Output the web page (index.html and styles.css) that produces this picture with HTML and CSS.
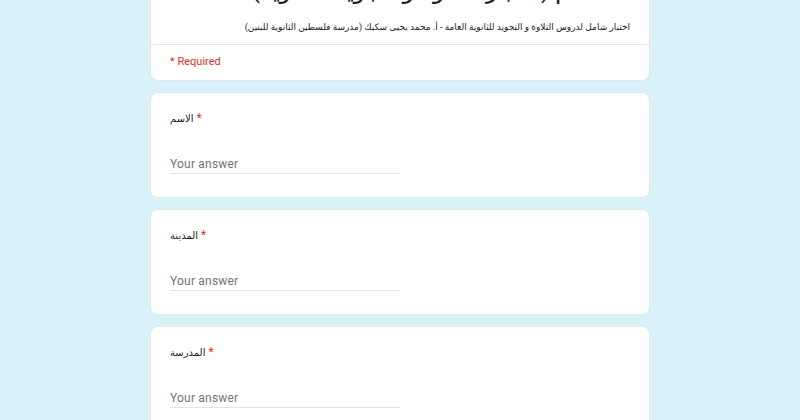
FILE: index.html
```html
<!DOCTYPE html>
<html lang="ar">
<head>
<meta charset="UTF-8">
<meta name="viewport" content="width=device-width, initial-scale=1.0">
<title>اختبار التلاوة والتجويد</title>
<link rel="stylesheet" href="styles.css">
</head>
<body>
<div class="form">
  <div class="card header-card">
    <div class="header-top">
      <h1 class="form-title">2022 م (اختبار التلاوة والتجويد للثانوية)</h1>
      <p class="form-desc">اختبار شامل لدروس التلاوة و التجويد للثانوية العامة - أ. محمد يحيى سكيك (مدرسة فلسطين الثانوية للبنين)</p>
    </div>
    <div class="header-bottom">
      <span class="required-note">* Required</span>
    </div>
  </div>

  <div class="card question">
    <div class="q-label"><span class="ar" dir="rtl">الاسم</span> <span class="star">*</span></div>
    <input class="answer" type="text" placeholder="Your answer">
  </div>

  <div class="card question">
    <div class="q-label"><span class="ar" dir="rtl">المدينة</span> <span class="star">*</span></div>
    <input class="answer" type="text" placeholder="Your answer">
  </div>

  <div class="card question">
    <div class="q-label"><span class="ar" dir="rtl">المدرسة</span> <span class="star">*</span></div>
    <input class="answer" type="text" placeholder="Your answer">
  </div>
</div>
</body>
</html>
```

FILE: styles.css
```css
html, body {
  margin: 0;
  padding: 0;
}
body {
  background-color: #d9f1f8;
  font-family: Roboto, "DejaVu Sans", sans-serif;
  color: #202124;
  overflow: hidden;
}
.form {
  width: 500px;
  margin: -23px auto 0;
  display: flex;
  flex-direction: column;
  gap: 11px;
}
.card {
  background-color: #fff;
  border: 1px solid #dce8ee;
  border-radius: 8px;
}
.header-top {
  padding: 0 19px 9px 20px;
  direction: rtl;
  text-align: right;
}
.form-title {
  margin: 0;
  font-size: 24px;
  line-height: 24px;
  font-weight: normal;
  color: #202124;
  white-space: nowrap;
}
.form-desc {
  margin: 17px 0 0;
  font-size: 9px;
  line-height: 16px;
  color: #202124;
  white-space: nowrap;
}
.header-bottom {
  border-top: 1px solid #e3e6e8;
  padding: 9px 19px 10px;
}
.required-note {
  display: block;
  font-size: 11px;
  line-height: 16px;
  color: #d93025;
}
.question {
  padding: 15px 19px 23px;
  display: flex;
  flex-direction: column;
  align-items: flex-start;
}
.q-label {
  font-size: 12px;
  line-height: 20px;
  color: #202124;
}
.ar {
  font-size: 10px;
}
.star {
  color: #d93025;
}
.answer {
  margin-top: 25px;
  width: 230px;
  height: 13px;
  border: none;
  border-bottom: 1px solid #e0e3e6;
  padding: 4px 0 2px;
  font-family: Roboto, sans-serif;
  font-size: 12px;
  line-height: 13px;
  letter-spacing: 0.2px;
  outline: none;
  background: transparent;
}
.answer::placeholder {
  color: #70757a;
}
```
